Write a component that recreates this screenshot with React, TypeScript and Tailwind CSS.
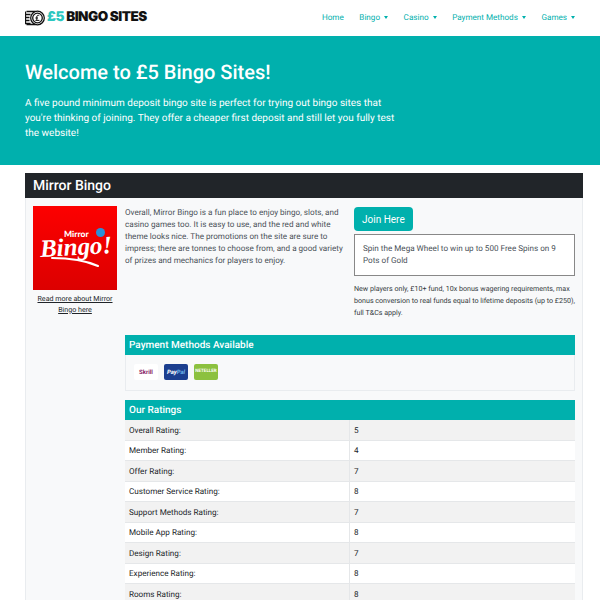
import { Fragment } from 'react';

const navItems = [
    { label: 'Home', caret: false },
    { label: 'Bingo', caret: true },
    { label: 'Casino', caret: true },
    { label: 'Payment Methods', caret: true },
    { label: 'Games', caret: true },
];

const ratings = [
    ['Overall Rating:', '5'],
    ['Member Rating:', '4'],
    ['Offer Rating:', '7'],
    ['Customer Service Rating:', '8'],
    ['Support Methods Rating:', '7'],
    ['Mobile App Rating:', '8'],
    ['Design Rating:', '7'],
    ['Experience Rating:', '8'],
    ['Rooms Rating:', '8'],
];

function CoinLogo() {
    return (
        <svg width="20" height="16" viewBox="0 0 20 16" fill="none" stroke="#111" strokeWidth="1.3">
            <path d="M1.5 1.5h9M.5 1.5v3h5M.5 4.5v3h4M.5 7.5v3h4M.5 10.5v3h5M1.5 14.5h9" />
            <circle cx="12.5" cy="8" r="6.8" fill="#fff" />
            <circle cx="12.5" cy="8" r="4.8" />
            <path d="M14.2 5.6c-1.2-.8-2.6-.2-2.4 1.4v3M10.4 8h2.6M10.4 10.4h4" strokeWidth="1" />
        </svg>
    );
}

function MirrorLogo() {
    return (
        <div className="w-[84px] h-[84px] shrink-0 bg-gradient-to-b from-[#fd0000] to-[#dc0000] relative overflow-hidden">
            <span className="absolute left-[31px] top-[24px] text-[8.5px] leading-none font-black text-white font-['Lato',sans-serif]">Mirror</span>
            <span className="absolute left-[63px] top-[22px] w-[9px] h-[9px] rounded-full bg-[#2a8fd8]" />
            <span className="absolute left-[7px] top-[35px] text-[25px] leading-[14px] italic font-bold text-white font-['Liberation_Serif',serif] -rotate-3">Bingo!</span>
            <svg className="absolute left-0 top-0" width="84" height="84" viewBox="0 0 84 84" fill="none">
                <path d="M19 52c14 0 30 1 46 8" stroke="#fff" strokeWidth="2" strokeLinecap="round" />
            </svg>
        </div>
    );
}

export default function App() {
    return (
        <div className="font-['Roboto',sans-serif] [text-rendering:geometricPrecision] bg-white text-[#212529] h-[600px] overflow-hidden">
            {/* Navbar */}
            <nav className="h-9 flex items-center justify-between pl-[25px] pr-[25px]">
                <div className="flex items-center gap-[2px]">
                    <CoinLogo />
                    <span className="font-['Inter',sans-serif] text-[13.5px] font-black tracking-[-0.5px] leading-none whitespace-pre">
                        <span className="text-[#2cc7c0]">£5 </span>
                        <span className="text-[#111]">BINGO SITES</span>
                    </span>
                </div>
                <ul className="flex items-center gap-[15.6px] pb-px text-[8.125px] text-[#00b0ad]">
                    {navItems.map((item) => (
                        <li key={item.label} className="flex items-center gap-[4px]">
                            {item.label}
                            {item.caret && (
                                <span className="w-0 h-0 border-x-[2.5px] border-x-transparent border-t-[3px] border-t-[#00b0ad]" />
                            )}
                        </li>
                    ))}
                </ul>
            </nav>

            {/* Hero */}
            <header className="bg-[#00b0ad] h-[129px] px-[25px] pt-[22px] text-white">
                <h1 className="text-[20px] leading-[28px] font-medium">Welcome to £5 Bingo Sites!</h1>
                <p className="mt-[10px] w-[370px] text-[10px] leading-[15px]">
                    A five pound minimum deposit bingo site is perfect for trying out bingo sites that you're thinking of joining. They offer a cheaper first deposit and still let you fully test the website!
                </p>
            </header>

            {/* Site card */}
            <section className="ml-[25px] mr-[17px] mt-2">
                <h2 className="bg-[#212529] text-white h-[25px] px-2 pt-px flex items-center text-[14px] font-medium">Mirror Bingo</h2>
                <div className="bg-[#f8f9fa] border-x border-[#e9ecef] pl-[7px] pr-[7px] pt-2 flex gap-2">
                    <div className="w-[84px] shrink-0">
                        <MirrorLogo />
                        <p className="mt-[4px] text-center text-[7.125px] leading-[10.5px] underline">Read more about Mirror Bingo here</p>
                    </div>
                    <div className="flex-1 min-w-0">
                        <div className="flex gap-[9px]">
                            <p className="w-[220px] text-[8.125px] leading-[12px] text-[#495057]">
                                Overall, Mirror Bingo is a fun place to enjoy bingo, slots, and casino games too. It is easy to use, and the red and white theme looks nice. The promotions on the site are sure to impress; there are tonnes to choose from, and a good variety of prizes and mechanics for players to enjoy.
                            </p>
                            <div className="flex-1 pt-px">
                                <button className="block bg-[#00b0ad] text-white text-[10px] h-6 px-2 rounded-[4px]">Join Here</button>
                                <div className="mt-[3px] h-[42px] bg-white border border-[#888] px-2 py-[7px] text-[8.125px] leading-[12px] text-[#495057]">
                                    Spin the Mega Wheel to win up to 500 Free Spins on 9 Pots of Gold
                                </div>
                                <p className="mt-[7px] text-[7.125px] leading-[12px] text-[#343a40]">
                                    New players only, £10+ fund, 10x bonus wagering requirements, max bonus conversion to real funds equal to lifetime deposits (up to £250), full T&amp;Cs apply.
                                </p>
                            </div>
                        </div>

                        <h3 className="mt-[16px] bg-[#00b0ad] text-white h-5 px-[4px] pt-px flex items-center text-[10px] font-medium">Payment Methods Available</h3>
                        <div className="h-[36px] border border-t-0 border-[#e9ecef] flex items-start gap-[6px] pl-2 pt-[9px]">
                            <div className="w-6 h-4 rounded-[2px] bg-white flex items-center justify-center text-[6px] font-bold text-[#862165]">Skrill</div>
                            <div className="w-6 h-4 rounded-[2px] bg-[#1c3f8f] flex items-center justify-center text-[6px] font-bold italic text-white">Pay<span className="text-[#6db5e8]">Pal</span></div>
                            <div className="w-6 h-4 rounded-[2px] bg-[#8cc13f] flex items-center justify-center text-[4.5px] font-bold text-white">NETELLER</div>
                        </div>

                        <h3 className="mt-[9px] bg-[#00b0ad] text-white h-5 px-[4px] pt-px flex items-center text-[10px] font-medium">Our Ratings</h3>
                        <div className="grid grid-cols-[224px_1fr] text-[8.125px] text-[#212529]">
                            {ratings.map(([label, value], i) => (
                                <Fragment key={label}>
                                    <div className={`h-[20.5px] flex items-center px-[4px] border-b border-[#e5e7e9] ${i % 2 === 0 ? 'bg-[#f2f2f2]' : 'bg-white'}`}>{label}</div>
                                    <div className={`h-[20.5px] flex items-center px-[4px] border-b border-l border-[#e5e7e9] ${i % 2 === 0 ? 'bg-[#f2f2f2]' : 'bg-white'}`}>{value}</div>
                                </Fragment>
                            ))}
                        </div>
                    </div>
                </div>
            </section>
        </div>
    );
}
